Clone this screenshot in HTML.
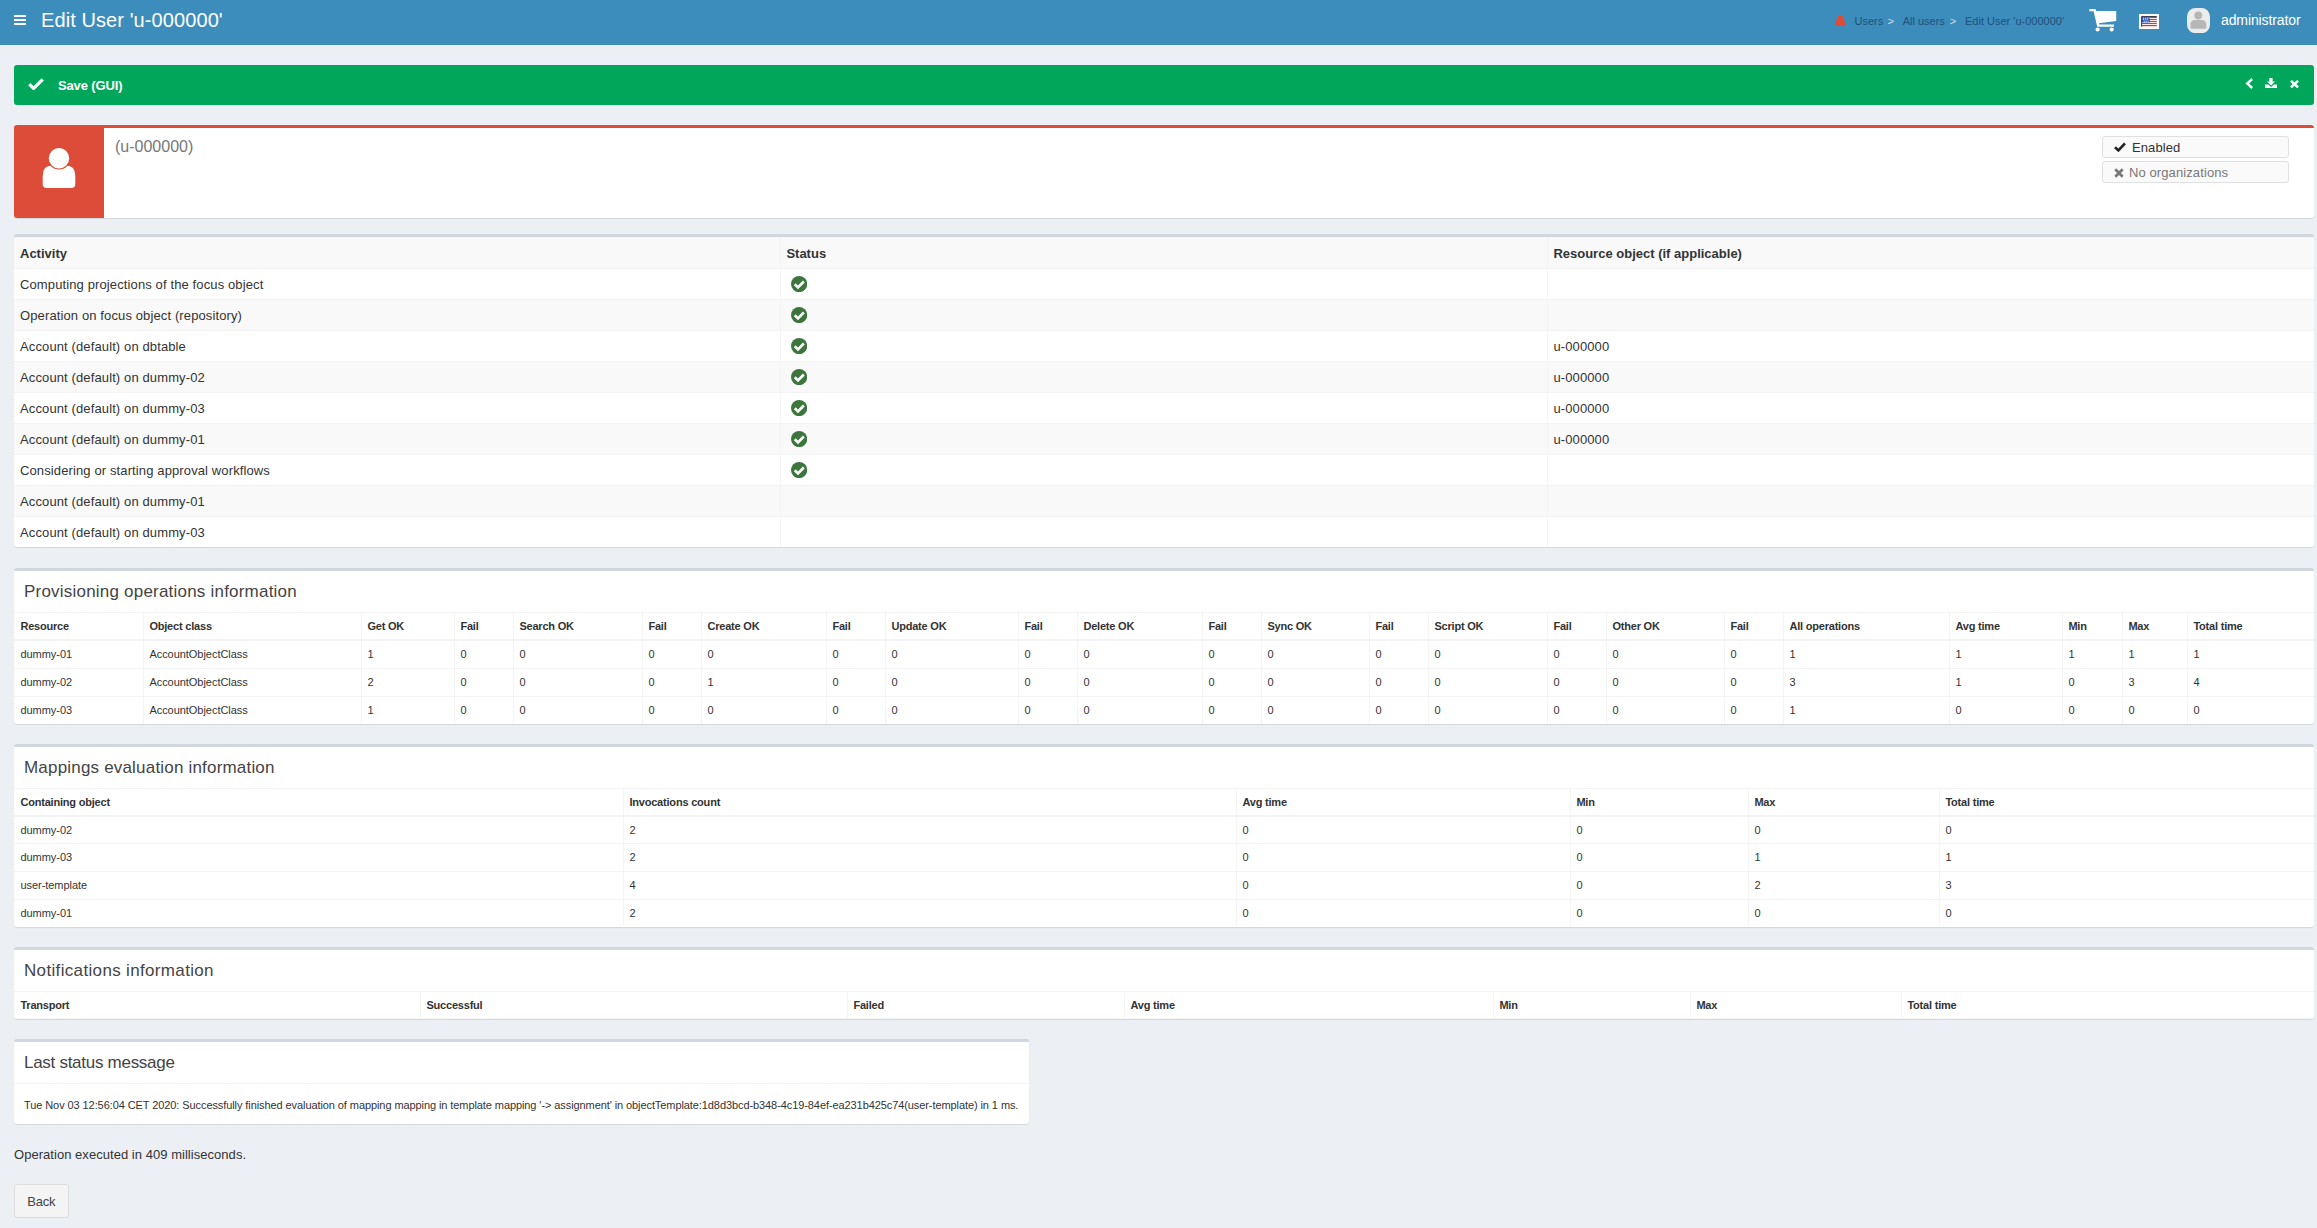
<!DOCTYPE html>
<html>
<head>
<meta charset="utf-8">
<title>Edit User 'u-000000'</title>
<style>
*{box-sizing:border-box}
html,body{margin:0;padding:0}
body{width:2317px;height:1228px;overflow:hidden;background:#ecf0f5;font-family:"Liberation Sans",sans-serif;font-size:13px;line-height:20px;color:#333;position:relative}
.hdr{position:absolute;left:0;top:0;width:2317px;height:45px;background:#3c8dbc;color:#fff}
.hdr .burger{position:absolute;left:14px;top:15px;width:12.4px;height:10px}
.hdr .burger i{position:absolute;left:0;width:12.4px;height:2px;background:#fff}
.hdr h1{position:absolute;left:41px;top:0;margin:0;font-size:20px;font-weight:400;line-height:41px;white-space:nowrap;letter-spacing:.09px}
.bc{position:absolute;top:0;height:45px;line-height:42px;font-size:11px;color:#21507a;white-space:nowrap}
.bc.sep{color:#d4dde4}
.uname{position:absolute;left:2221px;top:0;line-height:41px;font-size:14px;letter-spacing:-0.11px;color:#fff;white-space:nowrap}
.abs{position:absolute}
.alert{position:absolute;left:14px;top:65px;width:2300px;height:40px;background:#00a65a;border-radius:3px;color:#fff}
.alert b{position:absolute;left:44px;top:1px;line-height:40px;font-size:13px;letter-spacing:-0.14px;font-weight:700}
.summary{position:absolute;left:14px;top:125px;width:2300px;height:93px;background:#fff;border-top:3px solid #dd4b39;border-radius:3px;box-shadow:0 1px 1px rgba(0,0,0,.1)}
.summary .ico{position:absolute;left:0;top:0;width:90px;height:90px;background:#dd4b39;border-radius:0 0 0 3px}
.summary .nm{position:absolute;left:101px;top:8px;font-size:16px;line-height:22px;color:#777;white-space:nowrap}
.tag{position:absolute;left:2088px;width:187px;height:21.5px;border:1px solid #e0e0e0;border-radius:3px;background:#fafafa;font-size:13px;line-height:20px;white-space:nowrap}
.box{position:absolute;left:14px;width:2300px;overflow:hidden;background:#fff;border-top:3px solid #d2d6de;border-radius:3px;box-shadow:0 1px 1px rgba(0,0,0,.1)}
.box h3{margin:0;padding:10px 10px 0 10px;height:41px;font-size:17px;line-height:22px;font-weight:400;color:#444;letter-spacing:.14px;white-space:nowrap}
.g{width:2300px;overflow:hidden}
.r{display:flex;border-top:1px solid #f4f4f4;overflow:hidden}
.c{flex:0 0 auto;border-left:1px solid #f4f4f4;padding:5px 5px 0 5.4px;white-space:nowrap;overflow:hidden}
.c:first-child{border-left:0;padding-left:6.4px}
.h .c{font-weight:700}
.t14{font-size:13px;line-height:20px;letter-spacing:.12px}
.t14 .r{height:31px}
.t14 .r:nth-child(odd){background:#f9f9f9}
.t14 .c{padding-top:5.5px}
.t14 .h .c{letter-spacing:0}
.t14 .c:first-child{padding-left:6px}
.t12{font-size:11px;line-height:16.6px;letter-spacing:-.04px}
.t12 .r{height:27.7px}
.t12 .h{position:relative}
.t12 .h::after{content:"";position:absolute;left:0;right:0;bottom:0;height:1px;background:#f4f4f4}
.prov .r{height:28px}
.prov .h{height:28.3px}
.t12 .h .c{letter-spacing:-.2px}
svg.ok{display:block;margin:1.6px 0 0 4.3px}
</style>
</head>
<body>
<div class="hdr">
  <div class="burger"><i style="top:0"></i><i style="top:4px"></i><i style="top:8px"></i></div>
  <h1>Edit User 'u-000000'</h1>
  <svg class="abs" style="left:1835.3px;top:15.4px" width="11" height="11" viewBox="0 0 11 11"><circle cx="5.3" cy="3" r="2.8" fill="#dd4b39"/><path d="M0.6 10.6 V7.6 Q0.6 4.6 3.2 4.6 H7.4 Q10 4.6 10 7.6 V10.6 Z" fill="#dd4b39"/></svg>
  <div class="bc" style="left:1854.5px">Users</div>
  <div class="bc sep" style="left:1887.5px">&gt;</div>
  <div class="bc" style="left:1902.7px">All users</div>
  <div class="bc sep" style="left:1949.7px">&gt;</div>
  <div class="bc" style="left:1965px">Edit User 'u-000000'</div>
  <svg class="abs" style="left:2089px;top:8px" width="28" height="24" viewBox="0 0 28 24"><path d="M0.4 1.1 H6.5 L7.1 2.9 H27.2 V12.9 L9.9 15.3 L10.2 16.5 H24.9 V18.7 H8.2 L4.6 3.3 H0.4 Z" fill="#fff"/><circle cx="8.6" cy="21.5" r="2.1" fill="#fff"/><circle cx="22.7" cy="21.5" r="2.1" fill="#fff"/></svg>
  <svg class="abs" style="left:2139px;top:14px" width="20" height="15" viewBox="0 0 20 15"><rect width="20.2" height="15" fill="#fbfbfb"/><rect x="2.1" y="2" width="15.7" height="10.7" fill="#fff"/><g fill="#e0342c"><rect x="2.1" y="2.9" width="15.7" height="1.1"/><rect x="2.1" y="4.9" width="15.7" height="1.1"/><rect x="2.1" y="6.9" width="15.7" height="1.1"/><rect x="2.1" y="8.9" width="15.7" height="1.2"/><rect x="2.1" y="11" width="15.7" height="1.2"/></g><rect x="3" y="2.8" width="7.8" height="5.6" fill="#2f55b8"/><g fill="#fff"><circle cx="4.4" cy="4.1" r=".55"/><circle cx="6.3" cy="4.1" r=".55"/><circle cx="8.2" cy="4.1" r=".55"/><circle cx="10" cy="4.1" r=".55"/><circle cx="4.4" cy="5.6" r=".55"/><circle cx="6.3" cy="5.6" r=".55"/><circle cx="8.2" cy="5.6" r=".55"/><circle cx="5.3" cy="7.3" r=".55"/><circle cx="7.2" cy="7.3" r=".55"/><circle cx="9.1" cy="7.3" r=".55"/></g><path d="M2.6 12.7 V2.5 H17.8" fill="none" stroke="#3a3f55" stroke-width="1"/></svg>
  <svg class="abs" style="left:2187px;top:8px" width="23" height="25.2" viewBox="0 0 23 25.2"><rect width="23" height="25.2" rx="8.5" ry="8.5" fill="#ececec"/><path d="M3.4 19.4 V16.6 Q3.4 11.9 8 11.9 H14.7 Q19.3 11.9 19.3 16.6 V19.4 Q19.3 20.8 17.9 20.8 H4.8 Q3.4 20.8 3.4 19.4 Z" fill="#b7b7b7"/><circle cx="11.3" cy="7.5" r="4.6" fill="#ececec"/><circle cx="11.3" cy="7.5" r="3.9" fill="#b7b7b7"/></svg>
  <div class="uname">administrator</div>
</div>

<div class="alert">
  <svg class="abs" style="left:14px;top:13px" width="16" height="12" viewBox="0 0 16 12"><path d="M1.2 6.2 L5.6 10.4 L14.8 1.4" fill="none" stroke="#fff" stroke-width="3.2"/></svg>
  <b>Save (GUI)</b>
  <svg class="abs" style="left:2231px;top:13px" width="9" height="11" viewBox="0 0 9 11"><path d="M7.2 1 L2.2 5.5 L7.2 10" fill="none" stroke="#fff" stroke-width="2.4"/></svg>
  <svg class="abs" style="left:2251px;top:13px" width="12" height="10" viewBox="0 0 12 10"><path d="M4.4 0 H7.6 V3.6 H10 L6 7.4 L2 3.6 H4.4 Z" fill="#fff"/><path d="M0 6.6 H3.2 L6 9 L8.8 6.6 H12 V10 H0 Z" fill="#fff"/></svg>
  <svg class="abs" style="left:2276px;top:15.2px" width="9" height="8.3" viewBox="0 0 9 9" preserveAspectRatio="none"><path d="M1 1 L8 8 M8 1 L1 8" fill="none" stroke="#fff" stroke-width="2.6"/></svg>
</div>

<div class="summary">
  <div class="ico">
    <svg class="abs" style="left:28px;top:20px" width="34" height="40" viewBox="0 0 34 40"><path d="M0.7 36 V28 Q0.7 17.6 10 17.6 H24 Q33.3 17.6 33.3 28 V36 Q33.3 40 29.3 40 H4.7 Q0.7 40 0.7 36 Z" fill="#fff"/><circle cx="17" cy="10.3" r="11.3" fill="#dd4b39"/><circle cx="17" cy="10.3" r="10.2" fill="#fff"/></svg>
  </div>
  <div class="nm">(u-000000)</div>
  <div class="tag" style="top:8px;color:#333">
    <svg class="abs" style="left:10.5px;top:5px" width="12" height="10" viewBox="0 0 12 10"><path d="M1 5.2 L4.4 8.4 L11 1.4" fill="none" stroke="#222" stroke-width="2.6"/></svg>
    <span class="abs" style="left:29px;top:0.5px;letter-spacing:.1px">Enabled</span>
  </div>
  <div class="tag" style="top:33px;color:#777">
    <svg class="abs" style="left:10.5px;top:5.5px" width="10" height="10" viewBox="0 0 10 10"><path d="M1.3 1.3 L8.7 8.7 M8.7 1.3 L1.3 8.7" fill="none" stroke="#777" stroke-width="2.7"/></svg>
    <span class="abs" style="left:26px;top:0.5px;letter-spacing:.1px">No organizations</span>
  </div>
</div>

<div class="box" style="top:234px;height:313.4px"><div class="g t14">
<div class="r h"><div class="c" style="width:766px">Activity</div><div class="c" style="width:767px">Status</div><div class="c" style="width:767px">Resource object (if applicable)</div></div>
<div class="r"><div class="c" style="width:766px">Computing projections of the focus object</div><div class="c" style="width:767px"><svg class="ok" viewBox="0 0 16 16" width="16.2" height="16.2"><circle cx="8" cy="8" r="8" fill="#3c763d"/><path d="M3.7 8.1 L6.9 11.2 L12.7 5.4" fill="none" stroke="#fff" stroke-width="2.6"/></svg></div><div class="c" style="width:767px"></div></div>
<div class="r"><div class="c" style="width:766px">Operation on focus object (repository)</div><div class="c" style="width:767px"><svg class="ok" viewBox="0 0 16 16" width="16.2" height="16.2"><circle cx="8" cy="8" r="8" fill="#3c763d"/><path d="M3.7 8.1 L6.9 11.2 L12.7 5.4" fill="none" stroke="#fff" stroke-width="2.6"/></svg></div><div class="c" style="width:767px"></div></div>
<div class="r"><div class="c" style="width:766px">Account (default) on dbtable</div><div class="c" style="width:767px"><svg class="ok" viewBox="0 0 16 16" width="16.2" height="16.2"><circle cx="8" cy="8" r="8" fill="#3c763d"/><path d="M3.7 8.1 L6.9 11.2 L12.7 5.4" fill="none" stroke="#fff" stroke-width="2.6"/></svg></div><div class="c" style="width:767px">u-000000</div></div>
<div class="r"><div class="c" style="width:766px">Account (default) on dummy-02</div><div class="c" style="width:767px"><svg class="ok" viewBox="0 0 16 16" width="16.2" height="16.2"><circle cx="8" cy="8" r="8" fill="#3c763d"/><path d="M3.7 8.1 L6.9 11.2 L12.7 5.4" fill="none" stroke="#fff" stroke-width="2.6"/></svg></div><div class="c" style="width:767px">u-000000</div></div>
<div class="r"><div class="c" style="width:766px">Account (default) on dummy-03</div><div class="c" style="width:767px"><svg class="ok" viewBox="0 0 16 16" width="16.2" height="16.2"><circle cx="8" cy="8" r="8" fill="#3c763d"/><path d="M3.7 8.1 L6.9 11.2 L12.7 5.4" fill="none" stroke="#fff" stroke-width="2.6"/></svg></div><div class="c" style="width:767px">u-000000</div></div>
<div class="r"><div class="c" style="width:766px">Account (default) on dummy-01</div><div class="c" style="width:767px"><svg class="ok" viewBox="0 0 16 16" width="16.2" height="16.2"><circle cx="8" cy="8" r="8" fill="#3c763d"/><path d="M3.7 8.1 L6.9 11.2 L12.7 5.4" fill="none" stroke="#fff" stroke-width="2.6"/></svg></div><div class="c" style="width:767px">u-000000</div></div>
<div class="r"><div class="c" style="width:766px">Considering or starting approval workflows</div><div class="c" style="width:767px"><svg class="ok" viewBox="0 0 16 16" width="16.2" height="16.2"><circle cx="8" cy="8" r="8" fill="#3c763d"/><path d="M3.7 8.1 L6.9 11.2 L12.7 5.4" fill="none" stroke="#fff" stroke-width="2.6"/></svg></div><div class="c" style="width:767px"></div></div>
<div class="r"><div class="c" style="width:766px">Account (default) on dummy-01</div><div class="c" style="width:767px"></div><div class="c" style="width:767px"></div></div>
<div class="r"><div class="c" style="width:766px">Account (default) on dummy-03</div><div class="c" style="width:767px"></div><div class="c" style="width:767px"></div></div>
</div></div>

<div class="box" style="top:568px;height:156px"><h3 style="letter-spacing:.21px">Provisioning operations information</h3><div class="g t12 prov">
<div class="r h"><div class="c" style="width:129px">Resource</div><div class="c" style="width:218px">Object class</div><div class="c" style="width:93px">Get OK</div><div class="c" style="width:59px">Fail</div><div class="c" style="width:129px">Search OK</div><div class="c" style="width:59px">Fail</div><div class="c" style="width:125px">Create OK</div><div class="c" style="width:59px">Fail</div><div class="c" style="width:133px">Update OK</div><div class="c" style="width:59px">Fail</div><div class="c" style="width:125px">Delete OK</div><div class="c" style="width:59px">Fail</div><div class="c" style="width:108px">Sync OK</div><div class="c" style="width:59px">Fail</div><div class="c" style="width:119px">Script OK</div><div class="c" style="width:59px">Fail</div><div class="c" style="width:118px">Other OK</div><div class="c" style="width:59px">Fail</div><div class="c" style="width:166px">All operations</div><div class="c" style="width:113px">Avg time</div><div class="c" style="width:60px">Min</div><div class="c" style="width:65px">Max</div><div class="c" style="width:127px">Total time</div></div>
<div class="r"><div class="c" style="width:129px">dummy-01</div><div class="c" style="width:218px">AccountObjectClass</div><div class="c" style="width:93px">1</div><div class="c" style="width:59px">0</div><div class="c" style="width:129px">0</div><div class="c" style="width:59px">0</div><div class="c" style="width:125px">0</div><div class="c" style="width:59px">0</div><div class="c" style="width:133px">0</div><div class="c" style="width:59px">0</div><div class="c" style="width:125px">0</div><div class="c" style="width:59px">0</div><div class="c" style="width:108px">0</div><div class="c" style="width:59px">0</div><div class="c" style="width:119px">0</div><div class="c" style="width:59px">0</div><div class="c" style="width:118px">0</div><div class="c" style="width:59px">0</div><div class="c" style="width:166px">1</div><div class="c" style="width:113px">1</div><div class="c" style="width:60px">1</div><div class="c" style="width:65px">1</div><div class="c" style="width:127px">1</div></div>
<div class="r"><div class="c" style="width:129px">dummy-02</div><div class="c" style="width:218px">AccountObjectClass</div><div class="c" style="width:93px">2</div><div class="c" style="width:59px">0</div><div class="c" style="width:129px">0</div><div class="c" style="width:59px">0</div><div class="c" style="width:125px">1</div><div class="c" style="width:59px">0</div><div class="c" style="width:133px">0</div><div class="c" style="width:59px">0</div><div class="c" style="width:125px">0</div><div class="c" style="width:59px">0</div><div class="c" style="width:108px">0</div><div class="c" style="width:59px">0</div><div class="c" style="width:119px">0</div><div class="c" style="width:59px">0</div><div class="c" style="width:118px">0</div><div class="c" style="width:59px">0</div><div class="c" style="width:166px">3</div><div class="c" style="width:113px">1</div><div class="c" style="width:60px">0</div><div class="c" style="width:65px">3</div><div class="c" style="width:127px">4</div></div>
<div class="r"><div class="c" style="width:129px">dummy-03</div><div class="c" style="width:218px">AccountObjectClass</div><div class="c" style="width:93px">1</div><div class="c" style="width:59px">0</div><div class="c" style="width:129px">0</div><div class="c" style="width:59px">0</div><div class="c" style="width:125px">0</div><div class="c" style="width:59px">0</div><div class="c" style="width:133px">0</div><div class="c" style="width:59px">0</div><div class="c" style="width:125px">0</div><div class="c" style="width:59px">0</div><div class="c" style="width:108px">0</div><div class="c" style="width:59px">0</div><div class="c" style="width:119px">0</div><div class="c" style="width:59px">0</div><div class="c" style="width:118px">0</div><div class="c" style="width:59px">0</div><div class="c" style="width:166px">1</div><div class="c" style="width:113px">0</div><div class="c" style="width:60px">0</div><div class="c" style="width:65px">0</div><div class="c" style="width:127px">0</div></div>
</div></div>

<div class="box" style="top:744px;height:183px"><h3 style="letter-spacing:.19px">Mappings evaluation information</h3><div class="g t12">
<div class="r h"><div class="c" style="width:609px">Containing object</div><div class="c" style="width:613px">Invocations count</div><div class="c" style="width:334px">Avg time</div><div class="c" style="width:178px">Min</div><div class="c" style="width:191px">Max</div><div class="c" style="width:375px">Total time</div></div>
<div class="r"><div class="c" style="width:609px">dummy-02</div><div class="c" style="width:613px">2</div><div class="c" style="width:334px">0</div><div class="c" style="width:178px">0</div><div class="c" style="width:191px">0</div><div class="c" style="width:375px">0</div></div>
<div class="r"><div class="c" style="width:609px">dummy-03</div><div class="c" style="width:613px">2</div><div class="c" style="width:334px">0</div><div class="c" style="width:178px">0</div><div class="c" style="width:191px">1</div><div class="c" style="width:375px">1</div></div>
<div class="r"><div class="c" style="width:609px">user-template</div><div class="c" style="width:613px">4</div><div class="c" style="width:334px">0</div><div class="c" style="width:178px">0</div><div class="c" style="width:191px">2</div><div class="c" style="width:375px">3</div></div>
<div class="r"><div class="c" style="width:609px">dummy-01</div><div class="c" style="width:613px">2</div><div class="c" style="width:334px">0</div><div class="c" style="width:178px">0</div><div class="c" style="width:191px">0</div><div class="c" style="width:375px">0</div></div>
</div></div>

<div class="box" style="top:947px;height:72px"><h3 style="letter-spacing:.34px">Notifications information</h3><div class="g t12">
<div class="r h"><div class="c" style="width:406px">Transport</div><div class="c" style="width:427px">Successful</div><div class="c" style="width:277px">Failed</div><div class="c" style="width:369px">Avg time</div><div class="c" style="width:197px">Min</div><div class="c" style="width:211px">Max</div><div class="c" style="width:413px">Total time</div></div>
</div></div>

<div class="box" style="top:1039px;width:1015px;height:85px"><h3 style="border-bottom:1px solid #f4f4f4;height:42px;letter-spacing:-.28px">Last status message</h3>
  <div style="padding:13px 10px 0 10px;font-size:11px;line-height:17.14px;letter-spacing:-.085px;white-space:nowrap">Tue Nov 03 12:56:04 CET 2020: Successfully finished evaluation of mapping mapping in template mapping '-&gt; assignment' in objectTemplate:1d8d3bcd-b348-4c19-84ef-ea231b425c74(user-template) in 1 ms.</div>
</div>

<div class="abs" style="left:14px;top:1145px;font-size:13px;line-height:20px;letter-spacing:.04px;white-space:nowrap">Operation executed in 409 milliseconds.</div>
<div class="abs" style="left:14px;top:1184px;width:54.5px;height:34px;border:1px solid #ddd;border-radius:3px;background:#f4f4f4;color:#444;font-size:13px;line-height:33.4px;text-align:center;letter-spacing:-.2px">Back</div>
</body>
</html>
